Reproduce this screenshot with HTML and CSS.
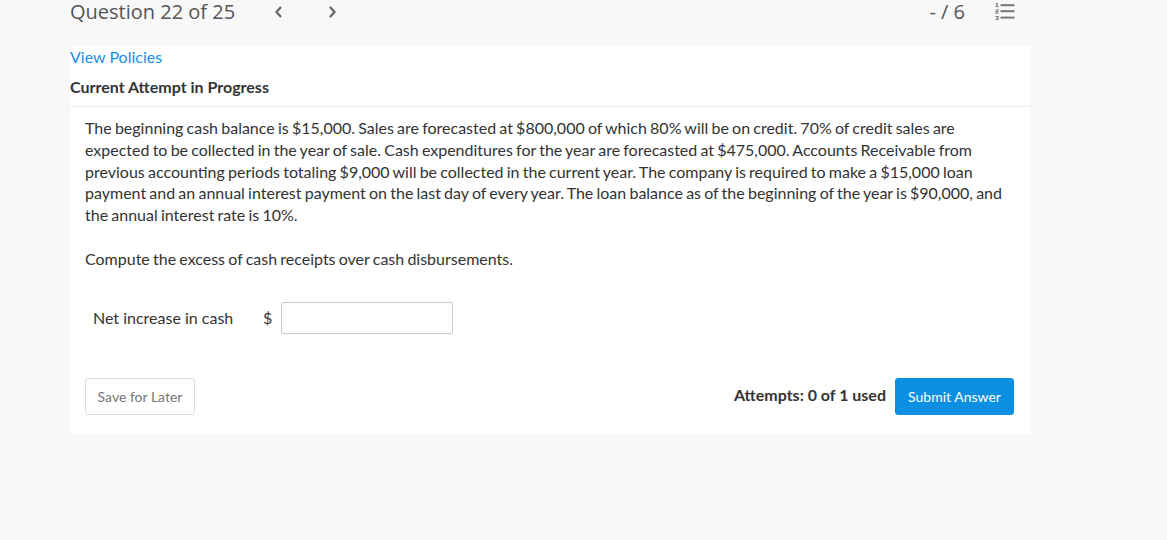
FILE: index.html
```html
<!DOCTYPE html>
<html>
<head>
<meta charset="utf-8">
<link rel="stylesheet" href="styles.css">
</head>
<body>
<header class="top">
  <div class="qtitle">Question 22 of 25</div>
  <div class="nav">
    <svg class="chev" width="10" height="14" viewBox="0 0 10 14"><polyline points="7,2 2.5,7 7,12" fill="none" stroke="#666" stroke-width="2.2"/></svg>
    <svg class="chev chev-r" width="10" height="14" viewBox="0 0 10 14"><polyline points="3,2 7.5,7 3,12" fill="none" stroke="#666" stroke-width="2.2"/></svg>
  </div>
  <div class="spacer"></div>
  <div class="score">- / 6</div>
  <svg class="listicon" width="22" height="20" viewBox="0 0 22 20">
    <g fill="#777">
      <rect x="1.5" y="2" width="1.2" height="4"/>
      <rect x="0.7" y="2" width="1.5" height="1"/>
      <rect x="0.5" y="5.2" width="3" height="0.9"/>
      <rect x="0.5" y="8.5" width="3" height="0.9"/>
      <rect x="2.5" y="8.5" width="1" height="2"/>
      <rect x="0.5" y="10.3" width="3" height="0.9"/>
      <rect x="0.5" y="10.3" width="1" height="2"/>
      <rect x="0.5" y="11.8" width="3" height="0.9"/>
      <rect x="0.5" y="15" width="3" height="0.9"/>
      <rect x="2.5" y="15" width="1" height="3.5"/>
      <rect x="1.2" y="16.6" width="2" height="0.9"/>
      <rect x="0.5" y="18" width="3" height="0.9"/>
      <rect x="5.5" y="3.2" width="14" height="2"/>
      <rect x="5.5" y="9.2" width="14" height="2"/>
      <rect x="5.5" y="15.6" width="14" height="2"/>
    </g>
  </svg>
</header>
<main class="card">
  <a class="policies" href="#">View Policies</a>
  <div class="attempt">Current Attempt in Progress</div>
  <section class="qbody">
    <p class="para">The beginning cash balance is $15,000. Sales are forecasted at $800,000 of which 80% will be on credit. 70% of credit sales are expected to be collected in the year of sale. Cash expenditures for the year are forecasted at $475,000. Accounts Receivable from previous accounting periods totaling $9,000 will be collected in the current year. The company is required to make a $15,000 loan payment and an annual interest payment on the last day of every year. The loan balance as of the beginning of the year is $90,000, and the annual interest rate is 10%.</p>
    <p class="para prompt">Compute the excess of cash receipts over cash disbursements.</p>
    <div class="answer">
      <span class="label">Net increase in cash</span>
      <span class="dollar">$</span>
      <input class="field" type="text">
    </div>
    <div class="footer">
      <button class="btn save">Save for Later</button>
      <div class="spacer"></div>
      <span class="attempts">Attempts: 0 of 1 used</span>
      <button class="btn submit">Submit Answer</button>
    </div>
  </section>
</main>
</body>
</html>
```

FILE: styles.css
```css
html, body {
  margin: 0;
  padding: 0;
  background: #f8f8f8;
}
body {
  font-family: Lato, "Open Sans", sans-serif;
  color: #333;
}
.top {
  height: 46px;
  display: flex;
  align-items: flex-start;
  padding-left: 70px;
  box-sizing: border-box;
}
.qtitle {
  font-family: "Open Sans", sans-serif;
  font-size: 20px;
  line-height: 24px;
  color: #555;
}
.nav {
  display: flex;
  margin-left: 39px;
  margin-top: 5px;
}
.chev-r {
  margin-left: 43px;
}
.spacer {
  flex: 1;
}
.score {
  font-family: "Open Sans", sans-serif;
  font-size: 20px;
  line-height: 24px;
  color: #555;
  margin-right: 30px;
}
.listicon {
  margin-right: 150px;
  margin-top: 1px;
}
.card {
  display: block;
  margin-left: 70px;
  width: 960px;
  background: #fff;
  padding-bottom: 19px;
}
.policies {
  display: block;
  font-size: 16px;
  line-height: 22px;
  color: #1a8fe3;
  text-decoration: none;
}
.attempt {
  margin-top: 8px;
  font-size: 16px;
  line-height: 22px;
  font-weight: bold;
  color: #333;
  padding-bottom: 8px;
  border-bottom: 1px solid #eaeaea;
}
.qbody {
  padding: 0 15px 0 15px;
}
.para {
  margin: 10px 0 0 0;
  font-size: 16px;
  line-height: 21.8px;
  word-spacing: -0.9px;
  color: #333;
}
.prompt {
  margin-top: 22px;
}
.answer {
  display: flex;
  align-items: center;
  margin-top: 32px;
  padding-left: 8px;
  font-size: 16px;
}
.label {
  width: 170px;
}
.dollar {
  width: 18px;
}
.field {
  width: 172px;
  height: 32px;
  box-sizing: border-box;
  border: 1px solid #ccc;
  border-radius: 2px;
  margin: 0;
  padding: 0 6px;
}
.footer {
  display: flex;
  align-items: center;
  margin-top: 44px;
  padding-right: 1px;
}
.btn {
  height: 37px;
  box-sizing: border-box;
  border-radius: 3px;
  font-family: Lato, sans-serif;
  font-size: 14px;
  padding: 0;
}
.save {
  width: 110px;
  background: #fff;
  border: 1px solid #ddd;
  color: #777;
}
.attempts {
  font-size: 16px;
  font-weight: bold;
  color: #333;
  margin-right: 9px;
  margin-top: -3px;
}
.submit {
  width: 119px;
  background: #0a8fe2;
  border: 1px solid #0a8fe2;
  color: #fff;
}
```
